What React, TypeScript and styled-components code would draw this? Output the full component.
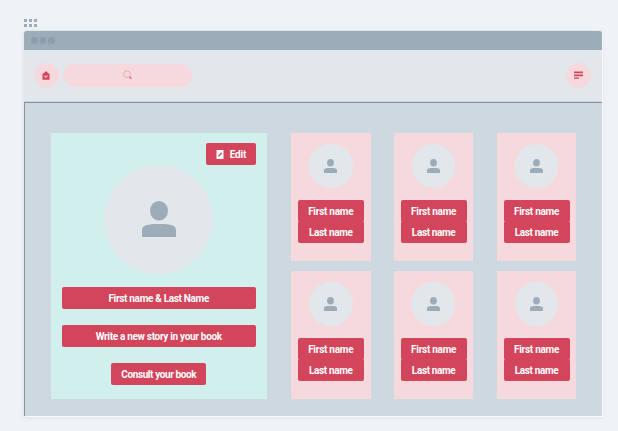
import React from "react";
import styled, { createGlobalStyle } from "styled-components";

const GlobalStyle = createGlobalStyle`
  * { box-sizing: border-box; }
  body { margin: 0; background: #eff3f7; }
`;

const Page = styled.main`
  width: 618px;
  height: 431px;
  overflow: hidden;
  background: #eff3f7;
  padding: 19px 15px 0 24px;
  font-family: Roboto, "Liberation Sans", sans-serif;
`;

const Grip = styled.div`
  display: grid;
  grid-template-columns: repeat(3, 3px);
  grid-auto-rows: 3px;
  gap: 2px;
  height: 12px;
`;

const GripDot = styled.i`
  width: 3px;
  height: 3px;
  background: #9dacb9;
`;

const Frame = styled.section`
  width: 578px;
  height: 385px;
  border-radius: 3px 3px 0 0;
  overflow: hidden;
  background: #ced8e1;
  box-shadow: 1px 1px 0 #f9fafb, 0 0 0 1px #e4e9ed, 0 1px 4px rgba(130, 150, 170, 0.25);
`;

const TitleBar = styled.header`
  display: flex;
  align-items: center;
  gap: 2px;
  height: 19px;
  padding-left: 7px;
  background: #9dacb9;
`;

const WindowDot = styled.i`
  width: 6.5px;
  height: 6.5px;
  border-radius: 50%;
  background: #8c9dad;
`;

const Toolbar = styled.nav`
  display: flex;
  align-items: center;
  gap: 4px;
  height: 52px;
  padding: 0 11px 1px 9.5px;
  border-bottom: 1px solid #ccd4db;
  background: #e2e7eb;
`;

const RoundButton = styled.button<{ $end?: boolean }>`
  display: flex;
  align-items: center;
  justify-content: center;
  width: 25px;
  height: 25px;
  margin-left: ${(p) => (p.$end ? "auto" : "0")};
  padding: 0;
  border: 0;
  border-radius: 50%;
  background: #f6d9dd;
`;

const SearchField = styled.div`
  display: flex;
  align-items: center;
  justify-content: center;
  width: 129.5px;
  height: 23px;
  border-radius: 12px;
  background: #f6d9dd;
`;

const Content = styled.div`
  display: flex;
  gap: 24px;
  height: 314px;
  padding: 30.4px 0 0 25.5px;
  border: solid #8193a3;
  border-width: 1px 0 0 1px;
`;

const Profile = styled.article`
  display: flex;
  flex-direction: column;
  align-items: center;
  width: 216.5px;
  height: 266px;
  padding: 9.3px 11px 0;
  background: #d1efed;
`;

const People = styled.div`
  display: grid;
  grid-template-columns: repeat(3, 79.5px);
  grid-auto-rows: 128px;
  gap: 10px 23.4px;
`;

const PersonCard = styled.article`
  display: flex;
  flex-direction: column;
  align-items: center;
  padding-top: 11px;
  background: #f6d9dd;
`;

const Avatar = styled.div<{ $size: number }>`
  display: flex;
  align-items: center;
  justify-content: center;
  flex: none;
  width: ${(p) => p.$size}px;
  height: ${(p) => p.$size}px;
  border-radius: 50%;
  background: #e2e7eb;
`;

const Button = styled.button<{ $width: number; $spacing: number; $top?: number; $end?: boolean }>`
  display: flex;
  align-items: center;
  justify-content: center;
  gap: 6px;
  flex: none;
  width: ${(p) => p.$width}px;
  height: 22px;
  margin-top: ${(p) => p.$top ?? 0}px;
  align-self: ${(p) => (p.$end ? "flex-end" : "center")};
  padding: 2px 0 0;
  border: 0;
  border-radius: 2px;
  background: #d2455b;
  color: #fff;
  font: 700 10px/12px Roboto, "Liberation Sans", sans-serif;
  letter-spacing: ${(p) => p.$spacing}px;
  white-space: nowrap;
`;

const NameStack = styled.div`
  display: flex;
  flex-direction: column;
  margin-top: 11.8px;
`;

const PersonIcon = ({ width, height }: { width: number; height: number }) => (
  <svg width={width} height={height} viewBox="0 0 34 36" fill="#9dacb9" preserveAspectRatio="none">
    <ellipse cx="17" cy="9.8" rx="9" ry="9.8" />
    <path d="M0 36V29C0 24.5 5 23 17 23S34 24.5 34 29V36Z" />
  </svg>
);

const HomeIcon = () => (
  <svg width="8" height="9" viewBox="0 0 8 9">
    <path d="M.5 2.5L2 2.3 3.2.6H4.8L6 2.3 7.5 2.5V8.7H.5Z" fill="#d2455b" />
    <path d="M2.4 4.7H3.6L4.1 5.4 5.4 3.7V5.5L4.6 6.6H3.4L2.4 5.9Z" fill="#f6d9dd" />
  </svg>
);

const SearchIcon = () => (
  <svg width="9" height="10" viewBox="0 0 9 10" fill="none">
    <circle cx="4" cy="4.2" r="3.4" stroke="#eba8b4" strokeWidth="1" />
    <path d="M6.5 6.8L8.3 8.8" stroke="#d96478" strokeWidth="1.3" />
  </svg>
);

const MenuIcon = () => (
  <svg width="9" height="9" viewBox="0 0 9 9" fill="#d2455b">
    <path d="M0 .5H9V2.2H0ZM0 3.5H9V5.2H0ZM0 6.5H5V7.8H0Z" />
  </svg>
);

const EditIcon = () => (
  <svg width="8" height="10" viewBox="0 0 8 10">
    <path d="M.5 0H7.5V9H.5Z" fill="#fff" />
    <path d="M2 6.7L2.6 5 5.3 2.2 6.3 3.2 3.6 6Z" fill="#d2455b" />
  </svg>
);

const people = [1, 2, 3, 4, 5, 6];

export default function App() {
  return (
    <>
      <GlobalStyle />
      <Page>
        <Grip>
          {people.map((dot) => (
            <GripDot key={dot} />
          ))}
        </Grip>
        <Frame>
          <TitleBar>
            <WindowDot />
            <WindowDot />
            <WindowDot />
          </TitleBar>
          <Toolbar>
            <RoundButton aria-label="Home">
              <HomeIcon />
            </RoundButton>
            <SearchField>
              <SearchIcon />
            </SearchField>
            <RoundButton aria-label="Menu" $end>
              <MenuIcon />
            </RoundButton>
          </Toolbar>
          <Content>
            <Profile>
              <Button $width={50} $spacing={-0.15} $end>
                <EditIcon />
                Edit
              </Button>
              <Avatar $size={109}>
                <PersonIcon width={34} height={36} />
              </Avatar>
              <Button $width={194} $spacing={-0.32} $top={13.6}>First name &amp; Last Name</Button>
              <Button $width={194} $spacing={-0.31} $top={16}>Write a new story in your book</Button>
              <Button $width={95} $spacing={-0.4} $top={16}>Consult your book</Button>
            </Profile>
            <People>
              {people.map((person) => (
                <PersonCard key={person}>
                  <Avatar $size={43.5}>
                    <PersonIcon width={13} height={14} />
                  </Avatar>
                  <NameStack>
                    <Button $width={66} $spacing={-0.26}>First name</Button>
                    <Button $width={66} $spacing={-0.36} $top={-1}>Last name</Button>
                  </NameStack>
                </PersonCard>
              ))}
            </People>
          </Content>
        </Frame>
      </Page>
    </>
  );
}
